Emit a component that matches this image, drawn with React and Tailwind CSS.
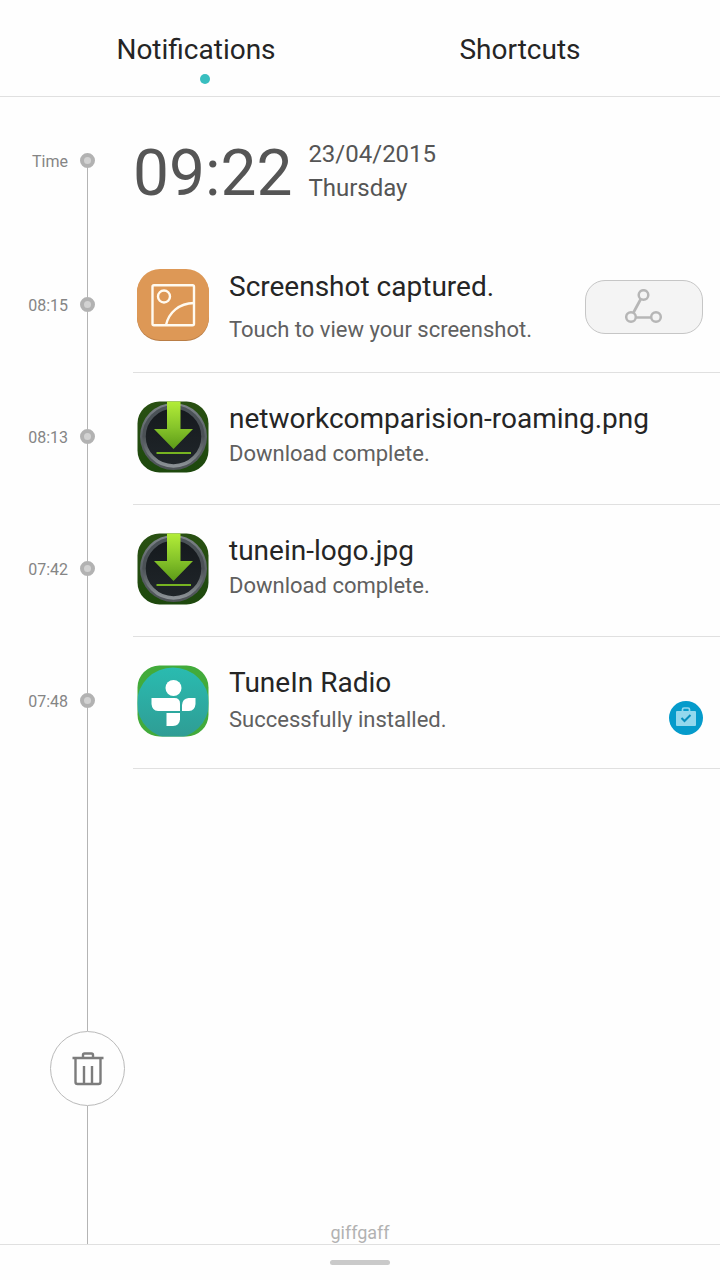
import { useState } from 'react';
import clsx from 'clsx';

const TABS = [
  { id: 'notifications', label: 'Notifications' },
  { id: 'shortcuts', label: 'Shortcuts' },
];

const ITEMS = [
  {
    time: '08:15',
    title: 'Screenshot captured.',
    text: 'Touch to view your screenshot.',
    icon: ScreenshotIcon,
    gap: 'mt-3',
    action: 'share',
  },
  {
    time: '08:13',
    title: 'networkcomparision-roaming.png',
    text: 'Download complete.',
    icon: DownloadIcon,
    gap: 'mt-1',
  },
  {
    time: '07:42',
    title: 'tunein-logo.jpg',
    text: 'Download complete.',
    icon: DownloadIcon,
    gap: 'mt-1',
  },
  {
    time: '07:48',
    title: 'TuneIn Radio',
    text: 'Successfully installed.',
    icon: TuneInIcon,
    gap: 'mt-1.5',
    action: 'store',
  },
];

function ScreenshotIcon() {
  return (
    <svg viewBox="0 0 72 72" className="size-[72px] shrink-0" aria-hidden="true">
      <rect y="1" width="72" height="71" rx="23" fill="#b97d45" />
      <rect width="72" height="71" rx="23" fill="#dd9856" />
      <g fill="none" stroke="#fffaf0" strokeWidth="2.4">
        <rect x="15.5" y="16.2" width="41.5" height="40" rx="1.5" />
        <circle cx="27" cy="27.5" r="6" />
        <path d="M29 56C32 43 42 34.5 57 34" />
      </g>
    </svg>
  );
}

function DownloadIcon() {
  return (
    <svg viewBox="0 0 72 72" className="size-[72px] shrink-0" aria-hidden="true">
      <defs>
        <linearGradient id="dlRing" x1="0" y1="0" x2="0" y2="1">
          <stop offset="0" stopColor="#4a5257" />
          <stop offset="0.5" stopColor="#4b5155" />
          <stop offset="1" stopColor="#8b9195" />
        </linearGradient>
        <linearGradient id="dlRim" x1="0" y1="0" x2="0" y2="1">
          <stop offset="0" stopColor="#7d8489" />
          <stop offset="0.5" stopColor="#5a6166" />
          <stop offset="1" stopColor="#4e5357" />
        </linearGradient>
        <linearGradient id="dlArrow" x1="0" y1="0" x2="0" y2="1">
          <stop offset="0" stopColor="#b4ee38" />
          <stop offset="0.55" stopColor="#86c42a" />
          <stop offset="1" stopColor="#5c9a18" />
        </linearGradient>
        <linearGradient id="dlFace" x1="0" y1="0" x2="0" y2="1">
          <stop offset="0" stopColor="#15191d" />
          <stop offset="1" stopColor="#20262a" />
        </linearGradient>
        <linearGradient id="dlBack" x1="0" y1="0" x2="0" y2="1">
          <stop offset="0" stopColor="#295012" />
          <stop offset="1" stopColor="#1d480d" />
        </linearGradient>
        <clipPath id="dlClip">
          <rect x="0.5" y="0.5" width="71" height="71" rx="22" />
        </clipPath>
      </defs>
      <g clipPath="url(#dlClip)">
        <rect width="72" height="72" fill="url(#dlBack)" />
        <circle cx="36.5" cy="35.5" r="33.5" fill="url(#dlRim)" />
        <circle cx="36.5" cy="35.5" r="29.5" fill="url(#dlFace)" stroke="url(#dlRing)" strokeWidth="3.5" />
        <path d="M30 0H43.500V28H56L36.500 48L17 28H30Z" fill="url(#dlArrow)" />
        <path d="M19.500 52H54" stroke="#77b321" strokeWidth="2" />
      </g>
    </svg>
  );
}

function TuneInIcon() {
  return (
    <svg viewBox="0 0 72 72" className="size-[72px] shrink-0" aria-hidden="true">
      <defs>
        <linearGradient id="tuneFace" x1="0" y1="0" x2="0" y2="1">
          <stop offset="0" stopColor="#2abbb0" />
          <stop offset="1" stopColor="#2f9c94" />
        </linearGradient>
        <clipPath id="tuneClip">
          <rect x="0.5" y="0.5" width="71" height="71" rx="22" />
        </clipPath>
      </defs>
      <g clipPath="url(#tuneClip)">
        <rect width="72" height="72" fill="#42ab3b" />
        <ellipse cx="36" cy="38" rx="36" ry="35.5" fill="url(#tuneFace)" />
      </g>
      <g fill="#fff">
        <circle cx="36.5" cy="23" r="8" />
        <path d="M14.500 33H37.500Q43 33 43 38.500V46H21Q15 45.500 14.500 39Z" />
        <path d="M45 46V40Q45.500 33.500 51.500 33H58.500V39Q58 45.500 52 46Z" />
        <path d="M29.500 48H43V54.500Q42.500 60.500 36 61H29.500Z" />
      </g>
    </svg>
  );
}

function ShareButton() {
  return (
    <button
      type="button"
      aria-label="Share"
      className="mt-[11px] h-[54px] w-[118px] shrink-0 rounded-[20px] border border-[#c6c6c6] bg-[#f4f4f4] flex items-center justify-center"
    >
      <svg viewBox="0 0 38 36" className="h-9 w-[38px]" fill="none" stroke="#b6b6b6" aria-hidden="true">
        <path d="M15.500 10.500L8.500 23.500M11 28.500H26" strokeWidth="2.7" />
        <g strokeWidth="2.5">
          <circle cx="18.500" cy="6" r="4.800" />
          <circle cx="6" cy="28" r="4.800" />
          <circle cx="31" cy="28" r="4.800" />
        </g>
      </svg>
    </button>
  );
}

function StoreBadge() {
  return (
    <svg viewBox="0 0 34 34" className="mt-9 size-[34px] shrink-0" aria-hidden="true">
      <circle cx="17" cy="17" r="17" fill="#059bcb" />
      <path d="M13.500 10.500V8.500Q13.500 7 15 7H19Q20.500 7 20.500 8.500V10.500" fill="none" stroke="#93d8ed" strokeWidth="1.7" />
      <rect x="7" y="10" width="20" height="15" rx="1" fill="#93d8ed" />
      <path d="M12.500 17L15.500 20L21.500 14" fill="none" stroke="#078fbd" strokeWidth="2" />
    </svg>
  );
}

function Rail({ first }) {
  return (
    <div className="flex w-[15px] shrink-0 flex-col items-center">
      <span className={clsx('h-14 w-px', !first && 'bg-[#b4b4b4]')} />
      <span className="size-[15px] rounded-full border-4 border-[#b2b2b2] bg-[#d2d2d2]" />
      <span className="w-px flex-1 bg-[#b4b4b4]" />
    </div>
  );
}

function Row({ time, first, children }) {
  return (
    <li className="flex">
      <time className="mr-3 w-[68px] shrink-0 pt-[54px] text-right text-base leading-[22px] text-[#858585]">
        {time}
      </time>
      <Rail first={first} />
      {children}
    </li>
  );
}

export default function App() {
  const [tab, setTab] = useState('notifications');

  return (
    <div className="flex min-h-screen flex-col bg-[#fefefe] font-['Roboto',sans-serif]">
      {/* Tabs */}
      <header className="border-b border-[#e0e0e0]">
        <nav className="grid h-24 grid-cols-2 pr-[38px] pl-[34px]">
          {TABS.map((t) => (
            <button
              key={t.id}
              type="button"
              onClick={() => setTab(t.id)}
              className="flex flex-col items-center pt-8 text-[28px] leading-9 text-[#252525]"
            >
              {t.label}
              {tab === t.id && <span className="mt-1.5 ml-[18px] size-2.5 rounded-full bg-[#38bebf]" />}
            </button>
          ))}
        </nav>
      </header>

      {/* Timeline */}
      <main className="flex flex-1 flex-col">
        <ul>
          <Row time="Time" first>
            <div className="ml-[38px] flex h-36 pt-10 text-[#555]">
              <span className="text-[64px] leading-[74px]">09:22</span>
              <div className="ml-4 text-2xl leading-[34px]">
                <p>23/04/2015</p>
                <p>Thursday</p>
              </div>
            </div>
          </Row>
          {ITEMS.map(({ time, title, text, icon: Icon, gap, action }) => (
            <Row key={title} time={time}>
              <article className="ml-[38px] flex h-[132px] min-w-0 flex-1 items-start border-b border-[#e0e0e0] pt-7 pr-[17px] pl-1">
                <Icon />
                <div className="ml-5 min-w-0 flex-1">
                  <h2 className="text-[28px] leading-9 whitespace-nowrap text-[#252525]">{title}</h2>
                  <p className={clsx('text-[22px] leading-[26px] text-[#606060]', gap)}>{text}</p>
                </div>
                {action === 'share' && <ShareButton />}
                {action === 'store' && <StoreBadge />}
              </article>
            </Row>
          ))}
        </ul>

        <div className="grid flex-1">
          <div className="col-start-1 row-start-1 ml-[50px] flex w-[75px] flex-col items-center">
            <span className="w-px flex-1 bg-[#b4b4b4]" />
            <button
              type="button"
              aria-label="Clear all"
              className="flex size-[75px] items-center justify-center rounded-full border border-[#bababa]"
            >
              <svg viewBox="0 0 32 34" className="h-[34px] w-8" fill="none" stroke="#7c7c7c" strokeWidth="2.4" aria-hidden="true">
                <path d="M0.500 6H31.500M11 6V3Q11 1.500 12.500 1.500H19.500Q21 1.500 21 3V6" />
                <path d="M3.500 6V30Q3.500 32 5.500 32H26.500Q28.500 32 28.500 30V6M12 14V31M20 14V31" />
              </svg>
            </button>
            <span className="h-[138px] w-px bg-[#b4b4b4]" />
          </div>
          <p className="col-start-1 row-start-1 self-end text-center text-lg leading-[22px] text-[#b2b2b2]">
            giffgaff
          </p>
        </div>
      </main>

      <footer className="flex h-9 justify-center border-t border-[#e0e0e0] pt-[15px]">
        <span className="h-[5px] w-[60px] rounded-full bg-[#cacaca]" />
      </footer>
    </div>
  );
}
